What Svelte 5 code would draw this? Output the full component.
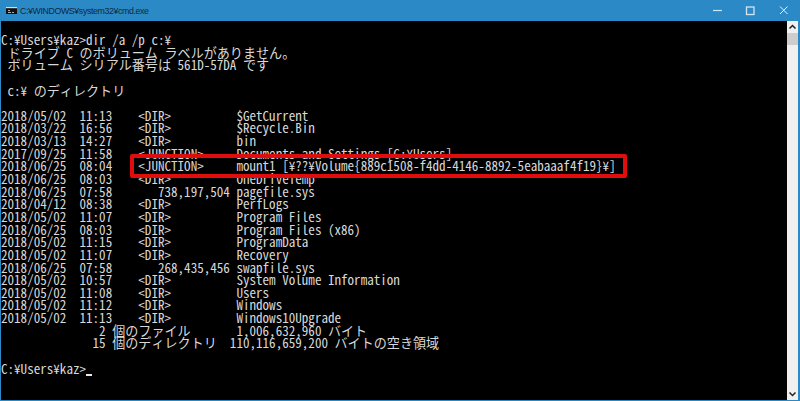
<script>
	const lines = [
		"C:¥Users¥kaz>dir /a /p c:¥",
		" ドライブ C のボリューム ラベルがありません。",
		" ボリューム シリアル番号は 561D-57DA です",
		"",
		" c:¥ のディレクトリ",
		"",
		"2018/05/02  11:13    <DIR>          $GetCurrent",
		"2018/03/22  16:56    <DIR>          $Recycle.Bin",
		"2018/03/13  14:27    <DIR>          bin",
		"2017/09/25  11:58    <JUNCTION>     Documents and Settings [C:¥Users]",
		"2018/06/25  08:04    <JUNCTION>     mount1 [¥??¥Volume{889c1508-f4dd-4146-8892-5eabaaaf4f19}¥]",
		"2018/06/25  08:03    <DIR>          OneDriveTemp",
		"2018/06/25  07:58       738,197,504 pagefile.sys",
		"2018/04/12  08:38    <DIR>          PerfLogs",
		"2018/05/02  11:07    <DIR>          Program Files",
		"2018/06/25  08:03    <DIR>          Program Files (x86)",
		"2018/05/02  11:15    <DIR>          ProgramData",
		"2018/05/02  11:07    <DIR>          Recovery",
		"2018/06/25  07:58       268,435,456 swapfile.sys",
		"2018/05/02  10:57    <DIR>          System Volume Information",
		"2018/05/02  11:08    <DIR>          Users",
		"2018/05/02  11:12    <DIR>          Windows",
		"2018/05/02  11:13    <DIR>          Windows10Upgrade",
		"               2 個のファイル       1,006,632,960 バイト",
		"              15 個のディレクトリ  110,116,659,200 バイトの空き領域",
		""
	];
</script>

<style>
	:global(body) {
		margin: 0;
		background: #000;
	}

	.window {
		width: 800px;
		height: 401px;
		display: flex;
		flex-direction: column;
		overflow: hidden;
		background: #2b8ac6;
	}

	.titlebar {
		height: 21px;
		flex: none;
		display: flex;
		align-items: center;
		padding-left: 6px;
		gap: 3px;
		color: #10283a;
		font-family: "Liberation Sans", sans-serif;
		font-size: 8.8px;
		letter-spacing: -0.38px;
	}

	.app-icon {
		width: 11px;
		height: 7px;
		flex: none;
	}

	.title {
		flex: 1;
	}

	.controls {
		display: flex;
		height: 21px;
	}

	.controls svg {
		width: 32px;
		height: 21px;
	}

	.main {
		flex: 1;
		display: flex;
		margin: 0 2px 1px 1px;
		min-height: 0;
	}

	.console {
		position: relative;
		flex: 1;
		background: #000;
		color: #d8d8d8;
		padding-top: 13px;
		font-family: "Noto Sans Mono CJK JP", "Noto Sans CJK JP", monospace;
		font-size: 13.08px;
	}

	.row {
		height: 12.65px;
		line-height: 12.65px;
		white-space: pre;
	}

	.cursor {
		display: inline-block;
		width: 6px;
		height: 2px;
		background: #e8e8e8;
		vertical-align: -2px;
	}

	.highlight {
		position: absolute;
		left: 129px;
		top: 133px;
		width: 489px;
		height: 16px;
		border: 4px solid #e00d0d;
		border-radius: 2px;
	}

	.scrollbar {
		width: 11px;
		flex: none;
		display: flex;
		flex-direction: column;
		background: #f0f0f0;
	}

	.scrollbar svg {
		width: 11px;
		height: 12px;
		flex: none;
	}

	.thumb {
		height: 12px;
		flex: none;
		background: #cdcdcd;
	}

	.track {
		flex: 1;
	}
</style>

<div class="window">
	<div class="titlebar">
		<svg class="app-icon" viewBox="0 0 11 7">
			<rect width="11" height="7" fill="#111" />
			<rect width="11" height="1.2" fill="#ddd" />
			<path d="M2 3.5h2M2 5.5h3M6 5.5h2" stroke="#ddd" stroke-width="0.8" fill="none" />
		</svg>
		<span class="title">C:¥WINDOWS¥system32¥cmd.exe</span>
		<div class="controls">
			<svg viewBox="0 0 32 21"><path d="M9 10.5h9" stroke="#cfe6f5" stroke-width="1.2" /></svg>
			<svg viewBox="0 0 32 21"><rect x="10.5" y="7" width="7.5" height="7.5" fill="none" stroke="#cfe6f5" stroke-width="1.3" /></svg>
			<svg viewBox="0 0 32 21"><path d="M12 6.5l7.5 7.5M19.5 6.5l-7.5 7.5" stroke="#e8f3fa" stroke-width="1" fill="none" /></svg>
		</div>
	</div>
	<div class="main">
		<div class="console">
			{#each lines as line}
				<div class="row">{line}</div>
			{/each}
			<div class="row">C:¥Users¥kaz&gt;<span class="cursor"></span></div>
			<div class="highlight"></div>
		</div>
		<div class="scrollbar">
			<svg viewBox="0 0 11 12"><path d="M2.5 7.5l3-3 3 3" fill="none" stroke="#222" stroke-width="1.5" /></svg>
			<div class="thumb"></div>
			<div class="track"></div>
			<svg viewBox="0 0 11 12"><path d="M2.5 4.5l3 3 3-3" fill="none" stroke="#222" stroke-width="1.5" /></svg>
		</div>
	</div>
</div>
